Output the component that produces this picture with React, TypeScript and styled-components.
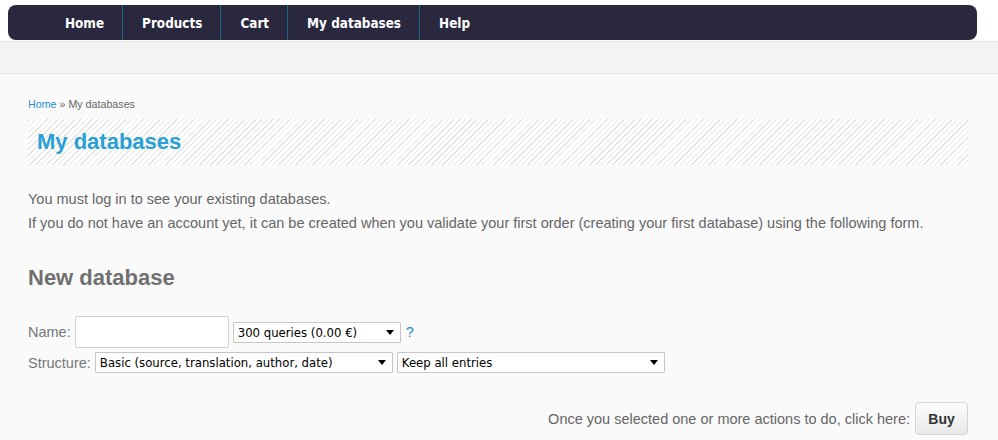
import styled, { createGlobalStyle } from 'styled-components'

const GlobalStyle = createGlobalStyle`
   html, body {
      margin: 0;
      padding: 0;
      background: #fff;
   }
   body {
      font-family: "Liberation Sans", Arial, sans-serif;
      font-size: 14.5px;
      color: #666;
   }
`

const Header = styled.header`
   background: #fff;
   padding: 5px 21px 1px 8px;
`
const Nav = styled.nav`
   display: flex;
   height: 35px;
   padding-left: 38px;
   background: #29283f;
   border-radius: 8px;
`
const NavItem = styled.a<{ $first?: boolean }>`
   display: flex;
   align-items: center;
   padding: 1px 18px 0 19px;
   color: #fff;
   font-family: "DejaVu Sans Condensed", "DejaVu Sans", sans-serif;
   font-stretch: condensed;
   font-weight: bold;
   font-size: 13.4px;
   text-decoration: none;
   border-left: ${(p) => (p.$first ? 'none' : '1px solid #1c6590')};
`
const SubBar = styled.div`
   height: 31px;
   background: #f3f3f3;
   border-top: 1px solid #e4e4e4;
   border-bottom: 1px solid #e4e4e4;
`
const Content = styled.main`
   background: #fafafa;
   padding: 23px 30px 20px 28px;
   min-height: 340px;
`
const Breadcrumb = styled.div`
   font-size: 10.7px;
   line-height: 14px;
   color: #666;

   a {
      color: #2a8ed6;
      text-decoration: none;
   }
`
const TitleBox = styled.div`
   margin-top: 8px;
   height: 46px;
   display: flex;
   align-items: center;
   padding-left: 9px;
   background-color: #fff;
   background-image: repeating-linear-gradient(
      -45deg,
      #fff 0px,
      #fff 3px,
      #e4e4e4 3px,
      #e4e4e4 4px
   );
`
const Title = styled.h1`
   margin: 0;
   font-size: 22px;
   font-weight: bold;
   color: #2a9fd6;
`
const Intro = styled.p`
   margin: 22px 0 0;
   line-height: 24px;
`
const SubTitle = styled.h2`
   margin: 30px 0 0;
   font-size: 22px;
   line-height: 26px;
   font-weight: bold;
   color: #707070;
`
const Form = styled.form`
   margin-top: 25px;
   display: flex;
   flex-direction: column;
   gap: 4px;
`
const Row = styled.div`
   display: flex;
   align-items: center;
   gap: 4px;
`
const Label = styled.label`
   color: #777;
`
const TextInput = styled.input`
   box-sizing: border-box;
   width: 154px;
   height: 32px;
   border: 1px solid #d2d2d2;
   border-radius: 2px;
   background: #fff;
   outline: none;
`
const SelectWrap = styled.div<{ $w: number }>`
   position: relative;
   width: ${(p) => p.$w}px;

   &::after {
      content: '';
      position: absolute;
      right: 7px;
      top: 8px;
      border-left: 4px solid transparent;
      border-right: 4px solid transparent;
      border-top: 5px solid #000;
      pointer-events: none;
   }
`
const Select = styled.select`
   box-sizing: border-box;
   width: 100%;
   height: 21px;
   appearance: none;
   padding: 0 20px 0 4px;
   border: 1px solid #c6c6c6;
   border-radius: 1px;
   background: #fff;
   color: #000;
   font-family: "DejaVu Sans Condensed", "DejaVu Sans", sans-serif;
   font-stretch: condensed;
   font-size: 13px;
   outline: none;
`
const Help = styled.a`
   margin-left: 1px;
   color: #2a8ed6;
   text-decoration: none;
`
const Footer = styled.div`
   margin-top: 29px;
   display: flex;
   justify-content: flex-end;
   align-items: center;
   gap: 5px;
`
const BuyButton = styled.button`
   width: 53px;
   height: 33px;
   border: 1px solid #d4d4d4;
   border-radius: 4px;
   background: linear-gradient(#fdfdfd, #e8e8e8);
   color: #333;
   font-family: "Liberation Sans", Arial, sans-serif;
   font-size: 14px;
   font-weight: bold;
`

const navItems = ['Home', 'Products', 'Cart', 'My databases', 'Help']

const App = () => {
   return (
      <>
         <GlobalStyle />
         <Header>
            <Nav>
               {navItems.map((item, i) => (
                  <NavItem key={item} href="#" $first={i === 0}>
                     {item}
                  </NavItem>
               ))}
            </Nav>
         </Header>
         <SubBar />
         <Content>
            <Breadcrumb>
               <a href="#">Home</a> » My databases
            </Breadcrumb>
            <TitleBox>
               <Title>My databases</Title>
            </TitleBox>
            <Intro>
               You must log in to see your existing databases.
               <br />
               If you do not have an account yet, it can be created when you
               validate your first order (creating your first database) using
               the following form.
            </Intro>
            <SubTitle>New database</SubTitle>
            <Form>
               <Row>
                  <Label>Name:</Label>
                  <TextInput type="text" />
                  <SelectWrap $w={168}>
                     <Select defaultValue="300">
                        <option value="300">300 queries (0.00 €)</option>
                     </Select>
                  </SelectWrap>
                  <Help href="#">?</Help>
               </Row>
               <Row>
                  <Label>Structure:</Label>
                  <SelectWrap $w={298}>
                     <Select defaultValue="basic">
                        <option value="basic">
                           Basic (source, translation, author, date)
                        </option>
                     </Select>
                  </SelectWrap>
                  <SelectWrap $w={268}>
                     <Select defaultValue="all">
                        <option value="all">Keep all entries</option>
                     </Select>
                  </SelectWrap>
               </Row>
            </Form>
            <Footer>
               <span>Once you selected one or more actions to do, click here:</span>
               <BuyButton type="button">Buy</BuyButton>
            </Footer>
         </Content>
      </>
   )
}

export default App
